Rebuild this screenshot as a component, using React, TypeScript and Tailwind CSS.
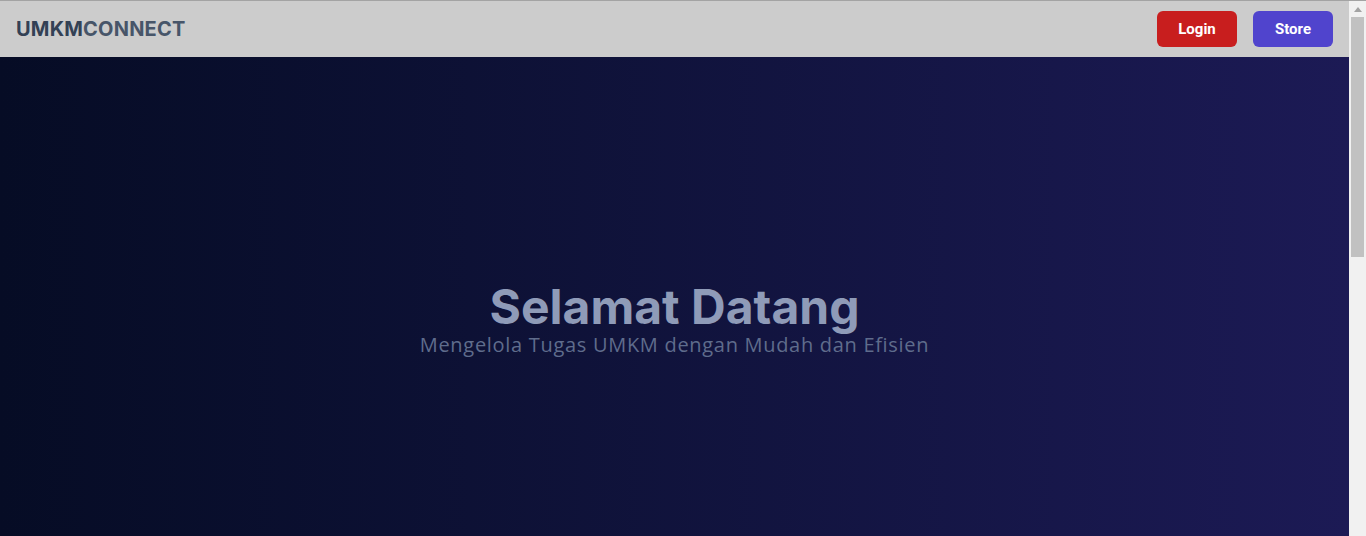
export default function App() {
  return (
    <div className="flex h-screen overflow-hidden font-['Inter',sans-serif]">
      <div className="flex-1 flex flex-col">
        <nav className="flex items-center justify-between h-[57px] shrink-0 px-4 bg-[#cccccc] border-t border-[#a3a3a3]">
          <p className="text-xl font-bold tracking-[0.01em]">
            <span className="text-[#334155]">UMKM</span>
            <span className="text-[#475569]">CONNECT</span>
          </p>
          <div className="flex gap-4">
            <button className="w-20 h-9 rounded-md bg-[#c81e1e] text-white text-[15px] font-bold font-['Roboto',sans-serif]">
              Login
            </button>
            <button className="w-20 h-9 rounded-md bg-[#5044cd] text-white text-[15px] font-bold font-['Roboto',sans-serif]">
              Store
            </button>
          </div>
        </nav>

        <section className="h-screen shrink-0 flex flex-col items-center justify-center pb-2 bg-gradient-to-r from-[#060c25] to-[#1c1a55]">
          <h1 className="text-5xl font-bold text-[#8f9bb8] leading-none">Selamat Datang</h1>
          <p className="text-[20px] leading-7 tracking-[0.035em] text-[#5f6c8c] font-['Open_Sans',sans-serif]">
            Mengelola Tugas UMKM dengan Mudah dan Efisien
          </p>
        </section>
      </div>

      {/* scrollbar */}
      <div className="w-[17px] shrink-0 flex flex-col bg-[#f1f1f1] border-t border-[#a3a3a3]">
        <div className="h-4 flex items-center justify-center">
          <svg width="8" height="5" viewBox="0 0 8 5">
            <path d="M0 5 L4 0 L8 5 Z" fill="#a3a3a3" />
          </svg>
        </div>
        <div className="mx-[2px] h-[240px] bg-[#c1c1c1]" />
      </div>
    </div>
  )
}
